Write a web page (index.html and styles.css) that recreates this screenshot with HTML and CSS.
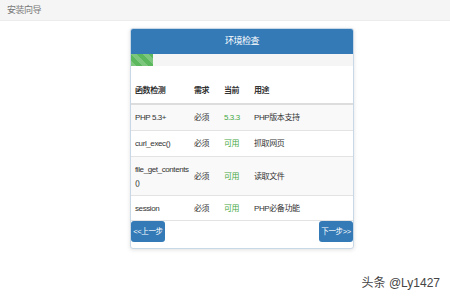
FILE: index.html
```html
<!DOCTYPE html>
<html lang="zh-CN">
<head>
    <meta charset="UTF-8">
    <title>安装向导</title>
    <link rel="stylesheet" href="styles.css">
</head>
<body>
    <div class="top-bar">安装向导</div>

    <div class="panel">
        <div class="panel-heading">环境检查</div>
        <div class="progress">
            <div class="progress-bar"></div>
        </div>

        <table class="check-table">
            <thead>
                <tr>
                    <th class="col-name">函数检测</th>
                    <th class="col-need">需求</th>
                    <th class="col-cur">当前</th>
                    <th>用途</th>
                </tr>
            </thead>
            <tbody>
                <tr>
                    <td>PHP 5.3+</td>
                    <td>必须</td>
                    <td class="ok">5.3.3</td>
                    <td>PHP版本支持</td>
                </tr>
                <tr>
                    <td>curl_exec()</td>
                    <td>必须</td>
                    <td class="ok">可用</td>
                    <td>抓取网页</td>
                </tr>
                <tr>
                    <td>file_get_contents<wbr>()</td>
                    <td>必须</td>
                    <td class="ok">可用</td>
                    <td>读取文件</td>
                </tr>
                <tr>
                    <td>session</td>
                    <td>必须</td>
                    <td class="ok">可用</td>
                    <td>PHP必备功能</td>
                </tr>
            </tbody>
        </table>

        <div class="panel-footer">
            <a href="#" class="btn">&lt;&lt;上一步</a>
            <a href="#" class="btn">下一步&gt;&gt;</a>
        </div>
    </div>

    <div class="watermark">头条 @Ly1427</div>
</body>
</html>
```

FILE: styles.css
```css
* {
    margin: 0;
    padding: 0;
    box-sizing: border-box;
}

body {
    background-color: #fff;
    font-family: "Liberation Sans", "Noto Sans CJK SC", sans-serif;
    font-size: 9px;
    color: #333;
    width: 450px;
    height: 300px;
    overflow: hidden;
}

.top-bar {
    height: 21px;
    line-height: 21px;
    padding-left: 7px;
    background-color: #f5f5f5;
    border-bottom: 1px solid #ececec;
    color: #777;
    letter-spacing: -0.5px;
}

.panel {
    width: 224px;
    margin: 7px 0 0 130px;
    border: 1px solid #c9d8e6;
    border-radius: 3px;
    box-shadow: 0 1px 4px rgba(0, 0, 0, 0.12);
    background-color: #fff;
    overflow: hidden;
}

.panel-heading {
    height: 25px;
    line-height: 25px;
    background-color: #337ab7;
    color: #fff;
    text-align: center;
    letter-spacing: -0.5px;
}

.progress {
    height: 12px;
    background-color: #f5f5f5;
}

.progress-bar {
    width: 22px;
    height: 100%;
    background-color: #5cb85c;
    background-image: linear-gradient(45deg,
        rgba(255,255,255,0.2) 25%, transparent 25%,
        transparent 50%, rgba(255,255,255,0.2) 50%,
        rgba(255,255,255,0.2) 75%, transparent 75%, transparent);
    background-size: 12px 12px;
}

.check-table {
    width: 100%;
    margin-top: 11px;
    border-collapse: collapse;
    table-layout: fixed;
    font-size: 8px;
    letter-spacing: -0.4px;
}

.check-table th,
.check-table td {
    padding: 6px 0 6px 4px;
    line-height: 13px;
    text-align: left;
    vertical-align: middle;
    border-top: 1px solid #e3e3e3;
}

.check-table th {
    border-top: none;
    border-bottom: 2px solid #ddd;
    font-weight: bold;
    padding-top: 7px;
}

.col-name {
    width: 59px;
}

.col-need,
.col-cur {
    width: 30px;
}

.check-table tbody tr:nth-child(odd) {
    background-color: #f9f9f9;
}

.check-table .ok {
    color: #45a845;
}

.panel-footer {
    display: flex;
    justify-content: space-between;
    border-top: 1px solid #e3e3e3;
    margin-top: -1px;
    padding-bottom: 6px;
}

.btn {
    display: block;
    width: 34px;
    height: 21px;
    line-height: 21px;
    background-color: #337ab7;
    color: #fff;
    text-align: center;
    text-decoration: none;
    border-radius: 3px;
    font-size: 7.5px;
    letter-spacing: -0.4px;
}

.watermark {
    position: absolute;
    right: 10px;
    bottom: 10px;
    font-size: 12px;
    color: #444;
    text-shadow: 0 0 2px #fff;
}
```
